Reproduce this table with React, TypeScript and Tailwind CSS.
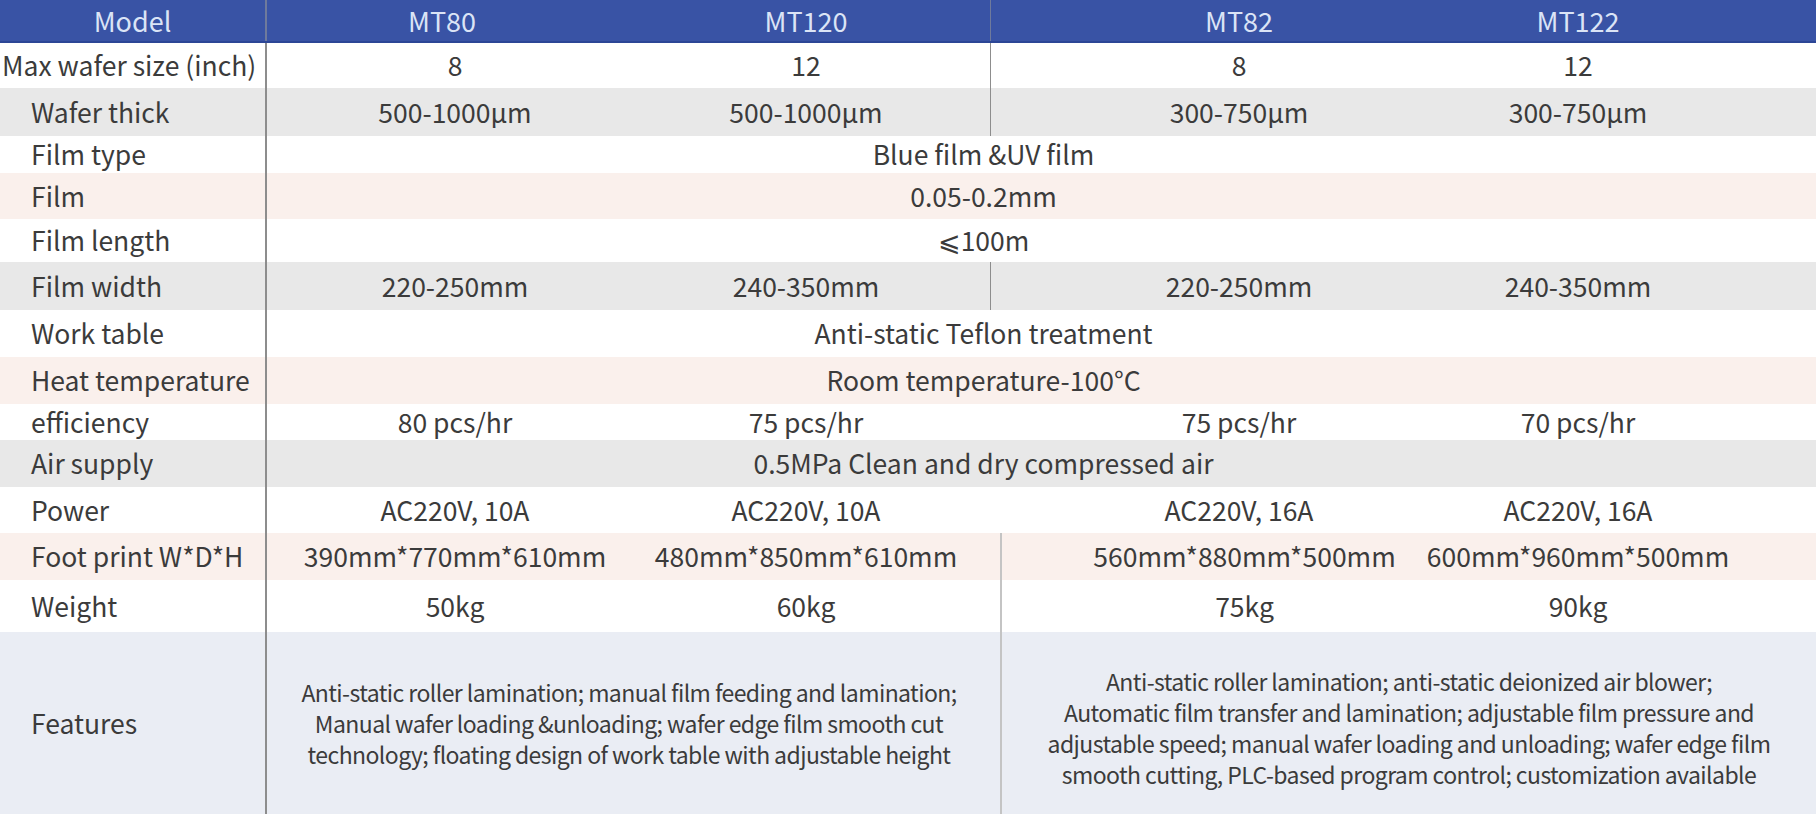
type Row = {
  label: string
  h: string
  bg: string
  cells?: string[]
  span?: string
  split?: 'a' | 'b'
  labelPad?: string
}

const rows: Row[] = [
  { label: 'Max wafer size (inch)', h: 'h-[45px]', bg: 'bg-white', cells: ['8', '12', '8', '12'], split: 'a', labelPad: 'pl-[2px]' },
  { label: 'Wafer thick', h: 'h-[48px]', bg: 'bg-[#e8e8e8]', cells: ['500-1000μm', '500-1000μm', '300-750μm', '300-750μm'], split: 'a' },
  { label: 'Film type', h: 'h-[37px]', bg: 'bg-white', span: 'Blue film &UV film' },
  { label: 'Film', h: 'h-[46px]', bg: 'bg-[#faf0ec]', span: '0.05-0.2mm' },
  { label: 'Film length', h: 'h-[43px]', bg: 'bg-white', span: '⩽100m' },
  { label: 'Film width', h: 'h-[48px]', bg: 'bg-[#e8e8e8]', cells: ['220-250mm', '240-350mm', '220-250mm', '240-350mm'], split: 'a' },
  { label: 'Work table', h: 'h-[47px]', bg: 'bg-white', span: 'Anti-static Teflon treatment' },
  { label: 'Heat temperature', h: 'h-[47px]', bg: 'bg-[#faf0ec]', span: 'Room temperature-100°C' },
  { label: 'efficiency', h: 'h-[36px]', bg: 'bg-white', cells: ['80 pcs/hr', '75 pcs/hr', '75 pcs/hr', '70 pcs/hr'] },
  { label: 'Air supply', h: 'h-[47px]', bg: 'bg-[#e8e8e8]', span: '0.5MPa Clean and dry compressed air' },
  { label: 'Power', h: 'h-[46px]', bg: 'bg-white', cells: ['AC220V, 10A', 'AC220V, 10A', 'AC220V, 16A', 'AC220V, 16A'] },
  { label: 'Foot print W*D*H', h: 'h-[47px]', bg: 'bg-[#faf0ec]', cells: ['390mm*770mm*610mm', '480mm*850mm*610mm', '560mm*880mm*500mm', '600mm*960mm*500mm'], split: 'b' },
  { label: 'Weight', h: 'h-[52px]', bg: 'bg-white', cells: ['50kg', '60kg', '75kg', '90kg'], split: 'b' },
]

// label | MT80 | MT120 | gap | MT82 | MT122 | empty tail
const grid = 'grid grid-cols-[267px_376px_326px_22px_496px_182px_147px]'
const cell = 'flex items-center justify-center whitespace-nowrap'

function SpecRow({ row }: { row: Row }) {
  return (
    <div className={`${grid} ${row.h} ${row.bg}`}>
      <div className={`flex items-center border-r-2 border-[#8d8d8d] whitespace-nowrap ${row.labelPad ?? 'pl-[31px]'}`}>
        {row.label}
      </div>
      {row.span ? (
        <div className={`${cell} col-span-5 pl-[31px]`}>{row.span}</div>
      ) : (
        <>
          <div className={cell}>{row.cells![0]}</div>
          <div className={cell}>{row.cells![1]}</div>
          <div className={row.split === 'a' ? 'border-r border-[#8d8d8d]' : ''} />
          <div className={`${cell} ${row.split === 'b' ? 'ml-[9px] border-l-2 border-[#c4c4c4]' : ''}`}>{row.cells![2]}</div>
          <div className={cell}>{row.cells![3]}</div>
        </>
      )}
      <div />
    </div>
  )
}

export default function App() {
  return (
    <div className="w-[1816px] h-[814px] overflow-hidden bg-white font-['Noto_Sans_CJK_SC','Source_Sans_Pro',sans-serif] text-[26.5px] leading-none text-[#3b3b3b]">
      <div className={`${grid} h-[43px] bg-[#3953a5] border-b-2 border-[#2c4696] text-[27px] text-[#dbe4f6]`}>
        <div className="flex items-center justify-center border-r-2 border-[#6f7a9c]">Model</div>
        <div className={`${cell} pr-[26px]`}>MT80</div>
        <div className={cell}>MT120</div>
        <div className="border-r border-[#6f7a9c]" />
        <div className={cell}>MT82</div>
        <div className={cell}>MT122</div>
        <div />
      </div>

      {rows.map((r) => (
        <SpecRow key={r.label} row={r} />
      ))}

      <div className={`${grid} h-[182px] bg-[#eaedf4]`}>
        <div className="flex items-center border-r-2 border-[#8d8d8d] pl-[31px]">Features</div>
        <div className="col-span-3 flex items-center justify-center text-center text-[23px] leading-[31px] tracking-[-0.025em]">
          <p>
            Anti-static roller lamination; manual film feeding and lamination;
            <br />
            Manual wafer loading &amp;unloading; wafer edge film smooth cut
            <br />
            technology; floating design of work table with adjustable height
          </p>
        </div>
        <div className="col-span-3 ml-[9px] flex items-center justify-center border-l-2 border-[#c4c4c4] pt-[10px] text-center text-[23px] leading-[31px] tracking-[-0.025em]">
          <p>
            Anti-static roller lamination; anti-static deionized air blower;
            <br />
            Automatic film transfer and lamination; adjustable film pressure and
            <br />
            adjustable speed; manual wafer loading and unloading; wafer edge film
            <br />
            smooth cutting, PLC-based program control; customization available
          </p>
        </div>
      </div>
    </div>
  )
}
